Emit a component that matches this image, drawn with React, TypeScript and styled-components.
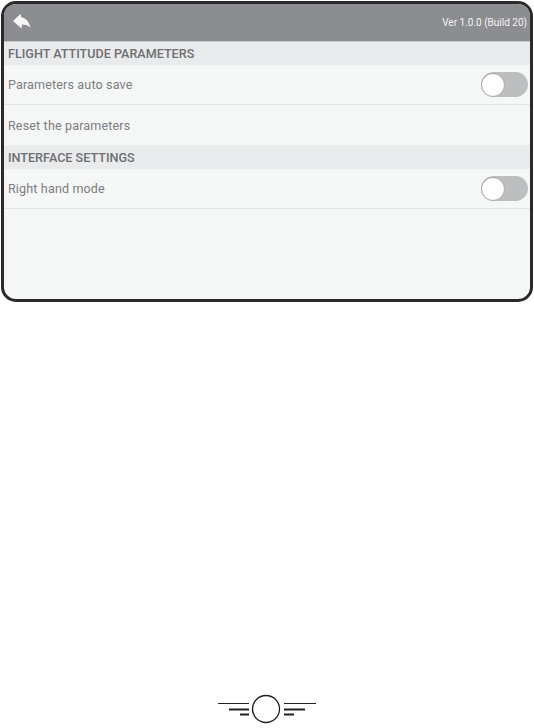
import React from 'react';
import styled, { createGlobalStyle } from 'styled-components';

const GlobalStyle = createGlobalStyle`
    html, body {
        margin: 0;
        padding: 0;
        background: #fff;
    }
`;

const Page = styled.div`
    width: 534px;
    height: 728px;
    box-sizing: border-box;
    padding: 1px 1px 3px 1px;
    display: flex;
    flex-direction: column;
    justify-content: space-between;
    overflow: hidden;
    font-family: Roboto, 'Liberation Sans', sans-serif;
`;

const Device = styled.div`
    width: 532px;
    height: 301px;
    box-sizing: border-box;
    border: 3px solid #2b2a2b;
    border-radius: 15px;
    background: #f5f6f6;
    overflow: hidden;
`;

const Header = styled.header`
    height: 34px;
    padding: 0 3px 3px 9px;
    display: flex;
    align-items: center;
    justify-content: space-between;
    background: #8b8d90;
    border-bottom: 1px solid #c9cacc;
    color: #f4f4f4;
`;

const Version = styled.span`
    font-size: 10px;
    margin-top: 3px;
`;

const SectionTitle = styled.div<{ $height: number }>`
    height: ${p => p.$height}px;
    box-sizing: border-box;
    padding: 0 0 0 4px;
    display: flex;
    align-items: center;
    background: #e9eaeb;
    color: #6d6f72;
    font-size: 12.6px;
    font-weight: 500;
`;

const Row = styled.div<{ $divider?: boolean }>`
    height: 40px;
    box-sizing: border-box;
    padding: 0 2px 0 4px;
    display: flex;
    align-items: center;
    justify-content: space-between;
    border-bottom: ${p => (p.$divider ? '1px solid #e2e3e4' : 'none')};
    color: #7b7d80;
    font-size: 12.5px;
    letter-spacing: 0.17px;
`;

const Track = styled.div`
    width: 47px;
    height: 25px;
    border-radius: 13px;
    background: #bdbec0;
    display: flex;
    align-items: center;
`;

const Knob = styled.div`
    width: 24px;
    height: 24px;
    box-sizing: border-box;
    border: 1px solid #a5a6a8;
    border-radius: 50%;
    background: #fff;
`;

const Emblem = styled.svg`
    display: block;
    align-self: center;
    flex: none;
`;

const BackArrow = () => (
    <svg width="18" height="15" viewBox="0 0 18 15" fill="#f6f6f6">
        <path d="M0 7 L7.5 0 L8.5 3.6 C13 4 16 8 17.5 13.5 C14.5 11.2 11.5 10.6 9 10.6 L8.5 14.5 Z" />
    </svg>
);

const Toggle = () => (
    <Track>
        <Knob />
    </Track>
);

const App: React.FC = () => (
    <Page>
        <GlobalStyle />
        <Device>
            <Header>
                <BackArrow />
                <Version>Ver 1.0.0 (Build 20)</Version>
            </Header>
            <SectionTitle $height={23}>FLIGHT ATTITUDE PARAMETERS</SectionTitle>
            <Row $divider>
                Parameters auto save
                <Toggle />
            </Row>
            <Row>Reset the parameters</Row>
            <SectionTitle $height={24}>INTERFACE SETTINGS</SectionTitle>
            <Row $divider>
                Right hand mode
                <Toggle />
            </Row>
        </Device>
        <Emblem width="100" height="32" viewBox="0 0 100 32" fill="none" stroke="#231f20">
            <circle cx="49" cy="16" r="13.5" strokeWidth="1.3" />
            <path d="M1 10.5H32M67 10.5H99" strokeWidth="1" />
            <path d="M12 16.5H32M67 16.5H88M23 21.5H32M67 21.5H77" strokeWidth="2" />
        </Emblem>
    </Page>
);

export default App;
